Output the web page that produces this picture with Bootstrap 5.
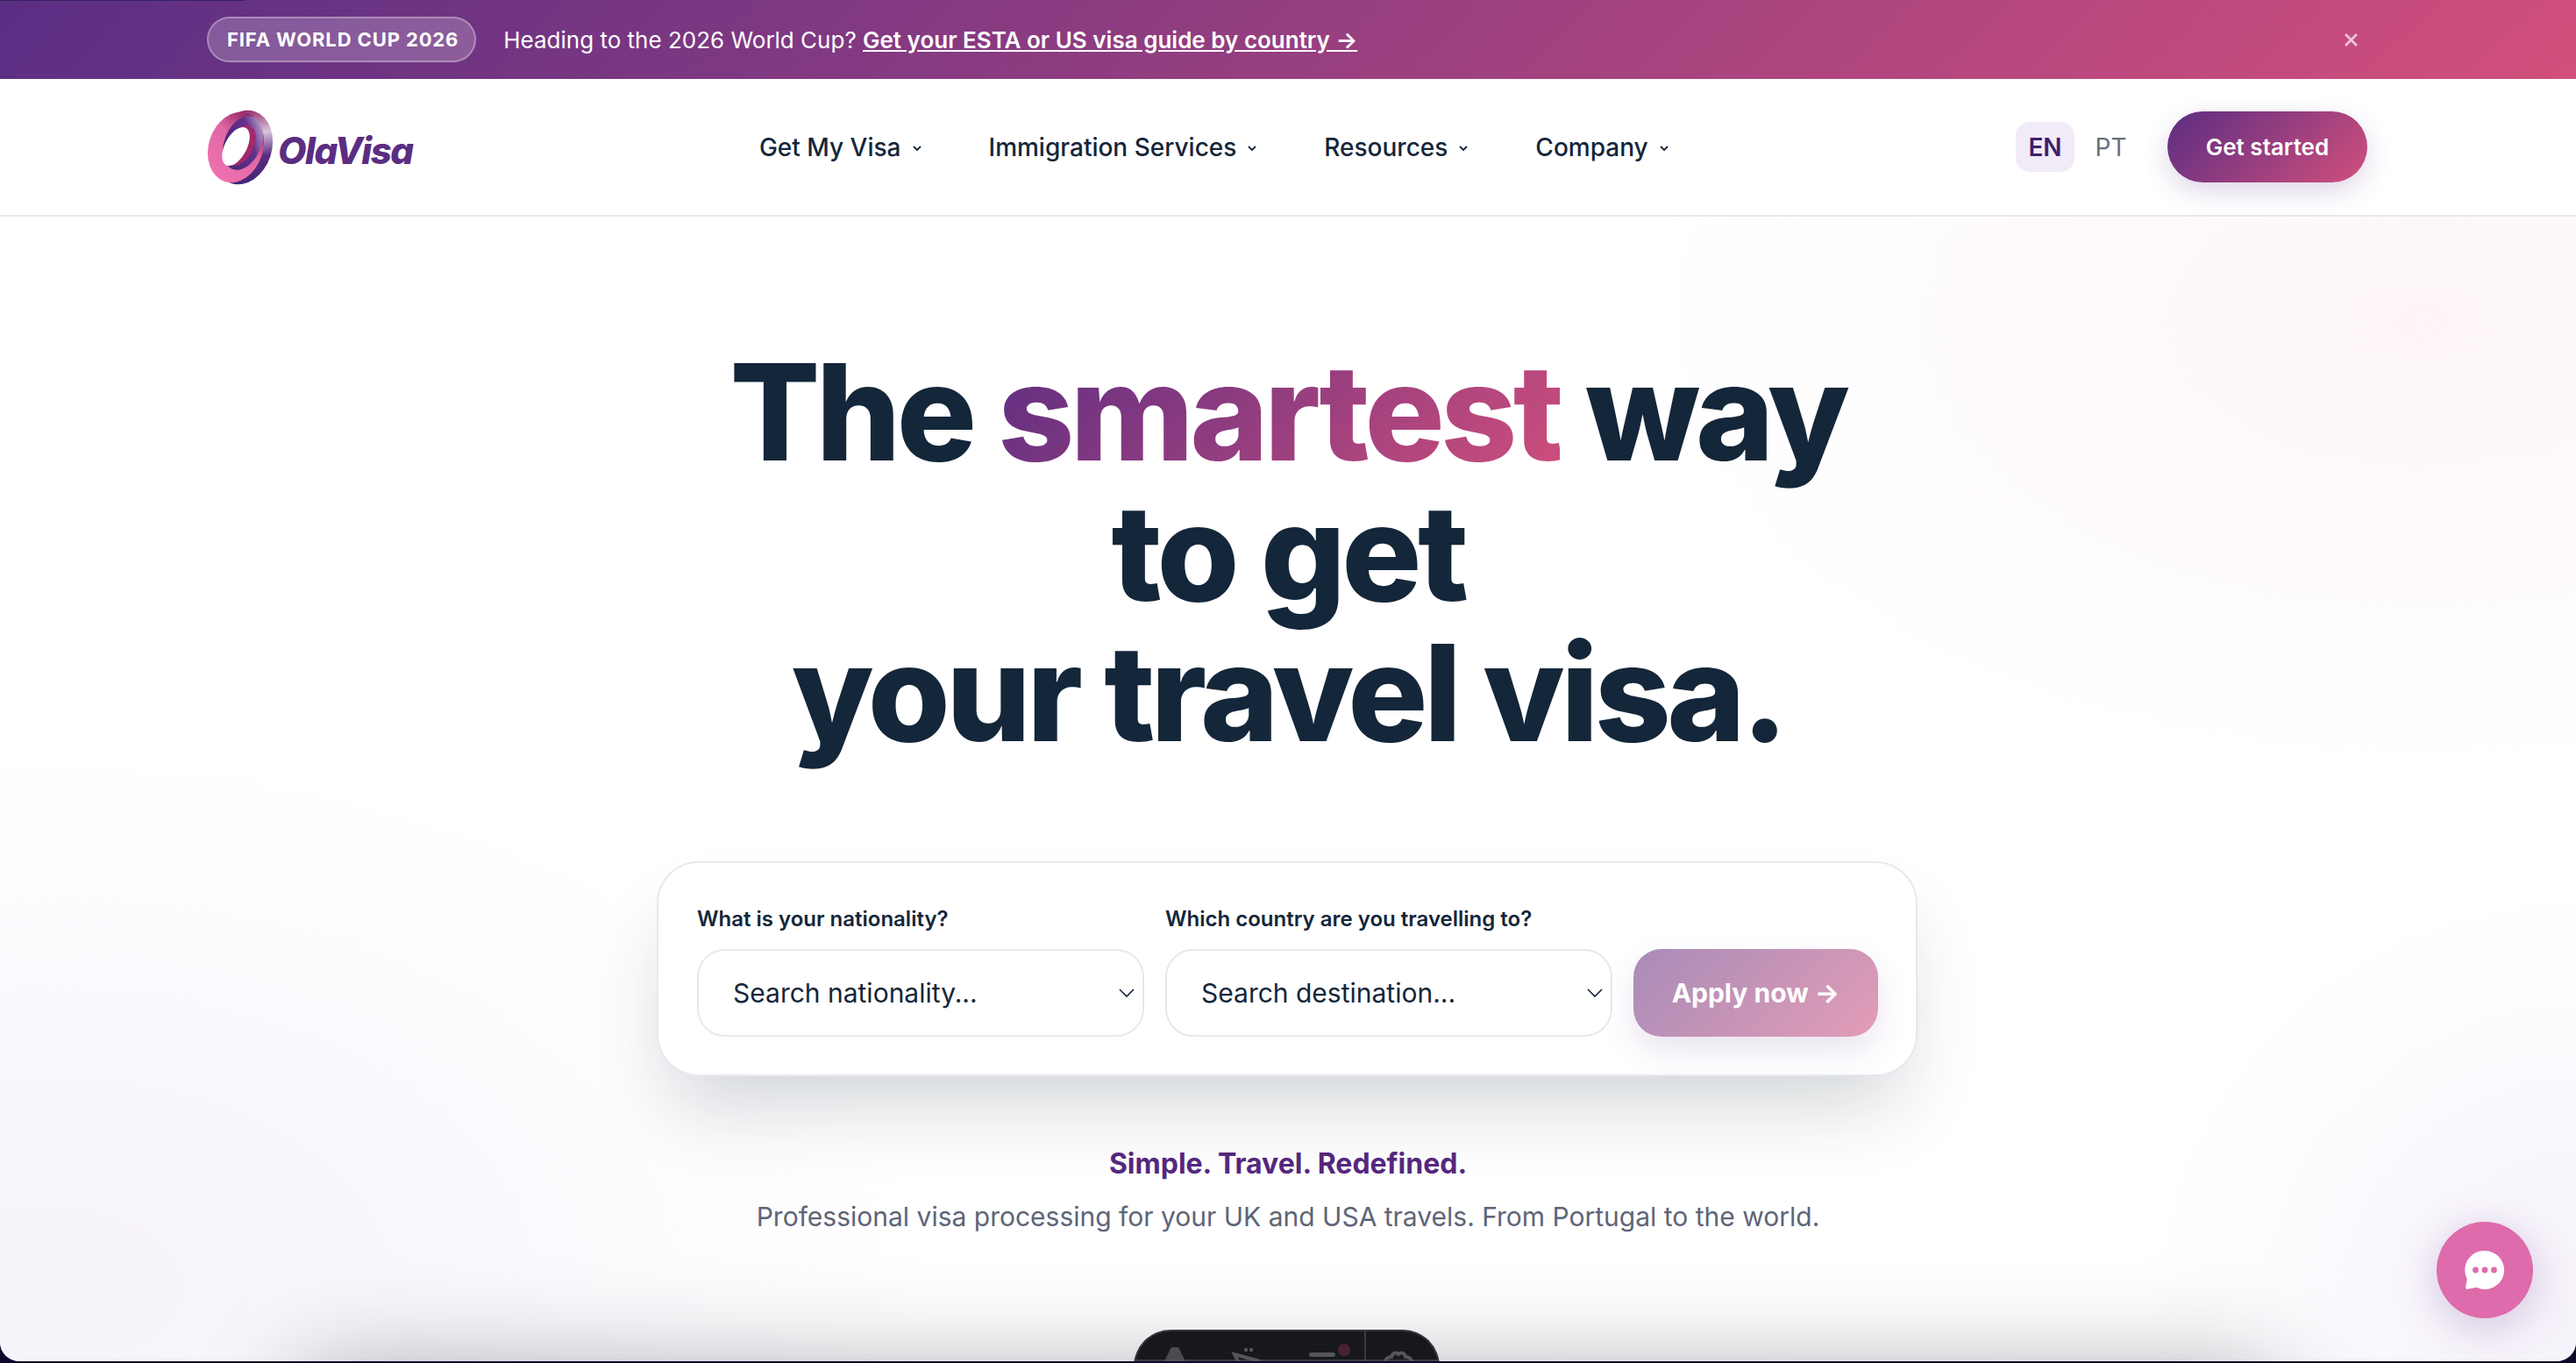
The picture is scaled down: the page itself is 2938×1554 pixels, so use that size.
<!DOCTYPE html>
<html lang="en">
  <head>
    <meta charset="UTF-8" />
    <meta name="viewport" content="width=device-width, initial-scale=1.0" />
    <title>OlaVisa</title>
    <link href="https://cdn.jsdelivr.net/npm/bootstrap@5.3.0/dist/css/bootstrap.min.css" rel="stylesheet" />
    <style>
      html, body { height: 100%; }
      body { background: #0d0829; font-family: Inter, "Liberation Sans", sans-serif; color: #142639; overflow: hidden; }
      .ola-page {
        height: 1552px; position: relative; overflow: hidden; background: #fff;
        border-radius: 0 0 22px 22px;
      }
      .ola-topline { position: absolute; left: 0; top: 0; width: 280px; height: 1px; background: #3a2160; z-index: 5; }
      .ola-wrap { width: 2464px; margin-left: 236px; }

      .ola-banner { height: 90px; background: linear-gradient(135deg, #5a2e84, #d14f7c); color: #fff; font-size: 26px; }
      .ola-pill {
        height: 52px; padding: 0 18px 0 21px; margin-right: 31px; font-size: 22px; font-weight: 700; letter-spacing: .04em;
        background: rgba(255, 255, 255, .2); border: 2px solid rgba(255, 255, 255, .3); color: #fff;
      }
      .ola-banner a { color: #fff; font-weight: 600; }
      .ola-x { width: 17px; height: 17px; opacity: .7; margin-right: 10px; }

      .ola-nav { height: 157px; background: #fff; border-bottom: 2px solid #e6e7ee; padding: 0; }
      .ola-logotext { font-size: 42px; font-weight: 800; font-style: italic; letter-spacing: -1.5px; color: #5b2d82; margin-left: 3px; margin-top: 8px; line-height: 1; }
      .ola-menu { gap: 60px; }
      .ola-menu .nav-link { color: #142639; font-size: 28px; font-weight: 500; padding: 0; display: flex; align-items: center; gap: 12px; }
      .ola-chev { width: 12px; height: 8px; margin-top: 2px; }
      .ola-lang { font-size: 28px; height: 57px; width: 67px; border-radius: 16px; }
      .ola-lang-on { background: #f1eaf7; color: #3f1f6b; font-weight: 600; }
      .ola-lang-off { color: #64707f; margin-left: 8px; margin-right: 31px; }
      .ola-start {
        width: 228px; height: 81px; border: 0; color: #fff; font-size: 26px; font-weight: 600;
        background: linear-gradient(135deg, #5b2d82, #d14f7c); box-shadow: 0 10px 30px rgba(91, 45, 130, .2);
      }

      .ola-hero {
        height: 1305px; padding-top: 143px; text-align: center; position: relative;
        background:
          radial-gradient(900px 520px at 2760px 120px, #fdf5f7, rgba(253, 245, 247, 0) 100%),
          radial-gradient(1000px 620px at 60px 1220px, #f6f2fa, rgba(246, 242, 250, 0) 100%),
          radial-gradient(500px 500px at 2938px 1260px, #f6f2fa, rgba(246, 242, 250, 0) 100%);
      }
      .ola-title { font-size: 152px; line-height: 160px; font-weight: 800; letter-spacing: -.03em; color: #142639; margin: 0; }
      .ola-grad { background: linear-gradient(135deg, #5b2d82, #d14f7c); -webkit-background-clip: text; background-clip: text; color: transparent; }

      .ola-search {
        width: 1438px; height: 245px; margin: 112px 0 0 749px; border: 2px solid #e8e8ef; border-radius: 48px;
        padding: 46px 43px 43px 44px; box-shadow: 0 50px 90px -20px rgba(20, 38, 57, .2); text-align: left; flex-direction: row; gap: 24px; align-items: flex-end;
      }
      .ola-field { width: 510px; }
      .ola-field .form-label { font-size: 24px; font-weight: 600; color: #142639; margin-bottom: 18px; line-height: 32px; display: block; white-space: nowrap; }
      .ola-field .form-select {
        height: 100px; border: 2px solid #e8e8ef; border-radius: 32px; font-size: 30px; color: #142639; padding: 0 39px;
        background-size: 20px 14px; background-position: right 8px center;
        background-image: url("data:image/svg+xml,%3csvg xmlns='http://www.w3.org/2000/svg' viewBox='0 0 20 14'%3e%3cpath fill='none' stroke='%23142639' stroke-width='1.6' d='M2 3l8 8 8-8'/%3e%3c/svg%3e");
      }
      .ola-apply {
        width: 279px; height: 100px; border: 0; border-radius: 32px; color: #fff; font-size: 30px; font-weight: 700; white-space: nowrap;
        background: linear-gradient(135deg, #a88cb8, #e39cb6); box-shadow: 0 16px 36px rgba(91, 45, 130, .13);
      }
      .ola-tag { font-size: 32px; font-weight: 700; color: #56287f; margin: 76px 0 0; line-height: 48px; }
      .ola-sub { font-size: 30px; color: #5d6577; margin: 12px 0 0; line-height: 48px; }

      .ola-shelf { position: absolute; left: 340px; right: 340px; top: 1322px; height: 200px; box-shadow: 0 0 120px rgba(20, 24, 40, .4); border-radius: 40px; }
      .ola-device {
        position: absolute; left: 1293px; top: 1269px; width: 349px; height: 120px; background: #17181c;
        border: 2px solid #35363c; border-bottom: 0; border-radius: 42px 42px 0 0;
      }
      .ola-device svg { display: block; }

      .ola-chat {
        position: absolute; left: 2779px; top: 1393px; width: 110px; height: 110px; background: #de6bab; border: 0;
        box-shadow: 0 10px 50px rgba(91, 45, 130, .25);
      }
    </style>
  </head>
  <body>
    <div class="ola-page">
      <span class="ola-topline"></span>

      <!-- promo strip -->
      <div class="ola-banner d-flex align-items-center">
        <div class="ola-wrap d-flex align-items-center">
          <span class="badge rounded-pill ola-pill d-inline-flex align-items-center">FIFA WORLD CUP 2026</span>
          <span>Heading to the 2026 World Cup? <a href="#">Get your ESTA or US visa guide by country →</a></span>
          <svg class="ola-x ms-auto" viewBox="0 0 17 17"><path d="M2 2l13 13M15 2L2 15" stroke="#fff" stroke-width="2.6" fill="none" /></svg>
        </div>
      </div>

      <!-- main nav -->
      <nav class="navbar navbar-expand ola-nav">
        <div class="ola-wrap d-flex align-items-center justify-content-between">
          <a class="d-flex align-items-center text-decoration-none" href="#">
            <svg width="78" height="86" viewBox="0 0 78 86">
              <defs>
                <linearGradient id="ringBack" x1="0.3" y1="0" x2="0.7" y2="1">
                  <stop offset="0" stop-color="#8d1f5e" />
                  <stop offset=".35" stop-color="#d9c6de" />
                  <stop offset=".65" stop-color="#5b2d82" />
                  <stop offset="1" stop-color="#3f2674" />
                </linearGradient>
                <linearGradient id="ringFace" x1="0.6" y1="0" x2="0.3" y2="1">
                  <stop offset="0" stop-color="#8e2060" />
                  <stop offset=".4" stop-color="#e068a5" />
                  <stop offset="1" stop-color="#f071b0" />
                </linearGradient>
                <linearGradient id="ringIn" x1="0.9" y1="0" x2="0.1" y2="1">
                  <stop offset="0" stop-color="#d8c4dd" />
                  <stop offset=".35" stop-color="#63318c" />
                  <stop offset="1" stop-color="#3f2674" />
                </linearGradient>
              </defs>
              <ellipse cx="41" cy="43" rx="33" ry="43" transform="rotate(18 41 43)" fill="url(#ringBack)" />
              <ellipse cx="33" cy="43" rx="31" ry="41" transform="rotate(18 33 43)" fill="url(#ringFace)" />
              <ellipse cx="41" cy="38" rx="21" ry="32" transform="rotate(22 41 38)" fill="url(#ringIn)" />
              <ellipse cx="38" cy="41" rx="15" ry="25" transform="rotate(28 38 41)" fill="#a02a6a" />
              <ellipse cx="33" cy="42" rx="12.500" ry="24" transform="rotate(28 33 42)" fill="#fff" />
            </svg>
            <span class="ola-logotext">OlaVisa</span>
          </a>

          <ul class="navbar-nav ola-menu">
            <li class="nav-item"><a class="nav-link" href="#">Get My Visa <svg class="ola-chev" viewBox="0 0 12 8"><path d="M2 2l4 4 4-4" fill="none" stroke="#142639" stroke-width="1.8" /></svg></a></li>
            <li class="nav-item"><a class="nav-link" href="#">Immigration Services <svg class="ola-chev" viewBox="0 0 12 8"><path d="M2 2l4 4 4-4" fill="none" stroke="#142639" stroke-width="1.8" /></svg></a></li>
            <li class="nav-item"><a class="nav-link" href="#">Resources <svg class="ola-chev" viewBox="0 0 12 8"><path d="M2 2l4 4 4-4" fill="none" stroke="#142639" stroke-width="1.8" /></svg></a></li>
            <li class="nav-item"><a class="nav-link" href="#">Company <svg class="ola-chev" viewBox="0 0 12 8"><path d="M2 2l4 4 4-4" fill="none" stroke="#142639" stroke-width="1.8" /></svg></a></li>
          </ul>

          <div class="d-flex align-items-center">
            <span class="ola-lang ola-lang-on d-flex align-items-center justify-content-center">EN</span>
            <span class="ola-lang ola-lang-off d-flex align-items-center justify-content-center">PT</span>
            <button class="btn rounded-pill ola-start">Get started</button>
          </div>
        </div>
      </nav>

      <!-- hero -->
      <section class="ola-hero">
        <h1 class="ola-title">The <span class="ola-grad">smartest</span> way<br />to get<br />your travel visa.</h1>

        <form class="card ola-search">
          <div class="ola-field">
            <label class="form-label">What is your nationality?</label>
            <select class="form-select"><option>Search nationality...</option></select>
          </div>
          <div class="ola-field">
            <label class="form-label">Which country are you travelling to?</label>
            <select class="form-select"><option>Search destination...</option></select>
          </div>
          <button type="button" class="btn ola-apply">Apply now →</button>
        </form>

        <p class="ola-tag">Simple. Travel. Redefined.</p>
        <p class="ola-sub">Professional visa processing for your UK and USA travels. From Portugal to the world.</p>

        <div class="ola-shelf"></div>
        <div class="ola-device">
          <svg width="345" height="40" viewBox="0 0 345 40">
            <path d="M33 34l8-16h8l8 16z" fill="#4a4b50" />
            <path d="M120 40l-7-14 29 8" fill="none" stroke="#55565a" stroke-width="4" />
            <circle cx="126" cy="21" r="2.200" fill="#55565a" /><circle cx="132" cy="21" r="2.200" fill="#55565a" />
            <rect x="198" y="24" width="30" height="5" rx="2.500" fill="#55565a" />
            <circle cx="238" cy="21" r="7" fill="#4a2235" />
            <path d="M262 0v40" stroke="#3a3b42" stroke-width="2" />
            <path d="M284 40c-1-7 3-11 8-11 1-4 5-6 8-3 3-3 7-1 8 3 5 0 9 4 8 11" fill="none" stroke="#55565a" stroke-width="4" />
            <rect x="0" y="32" width="345" height="2" fill="#55565a" opacity=".6" />
          </svg>
        </div>
      </section>

      <button class="btn rounded-circle ola-chat d-flex align-items-center justify-content-center p-0" aria-label="Chat">
        <svg width="48" height="48" viewBox="0 0 48 48">
          <path d="M24 2a22 22 0 1 1-9.500 41.800L4.500 45.800c-1.600.3-2.700-.8-2.400-2.300l1.700-9.300A22 22 0 0 1 24 2z" fill="#fff" />
          <circle cx="13.500" cy="24" r="3.400" fill="#de6bab" /><circle cx="24" cy="24" r="3.400" fill="#de6bab" /><circle cx="34.500" cy="24" r="3.400" fill="#de6bab" />
        </svg>
      </button>
    </div>
    <script src="https://cdn.jsdelivr.net/npm/bootstrap@5.3.0/dist/js/bootstrap.bundle.min.js"></script>
  </body>
</html>
